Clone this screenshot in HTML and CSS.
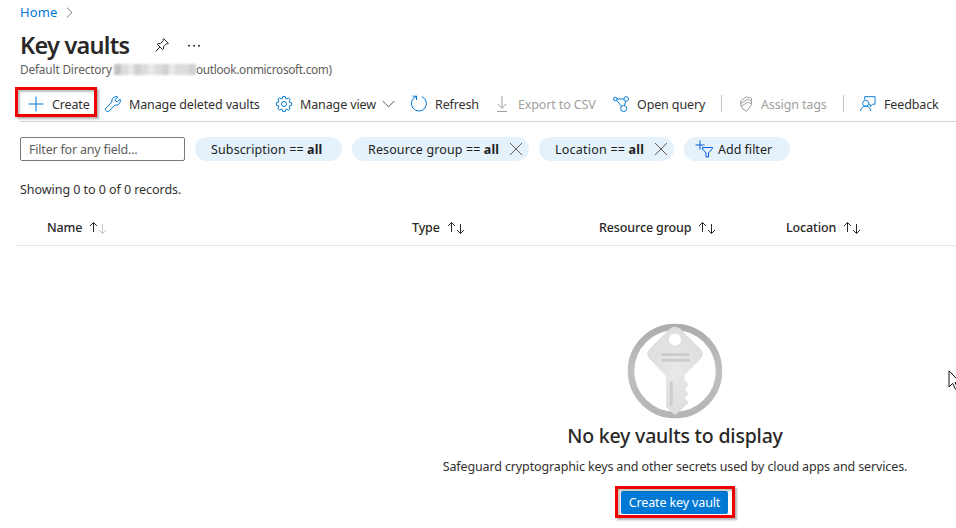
FILE: index.html
```html
<!DOCTYPE html>
<html lang="en">
<head>
<meta charset="utf-8">
<title>Key vaults</title>
<link rel="stylesheet" href="styles.css">
</head>
<body>
<svg class="defs" width="0" height="0" aria-hidden="true">
  <symbol id="up" viewBox="0 0 9 12"><path d="M4.500 11V1.500M1 5l3.500-3.500L8 5"/></symbol>
  <symbol id="down" viewBox="0 0 9 12"><path d="M4.500 1v9.500M1 7l3.500 3.500L8 7"/></symbol>
  <symbol id="close" viewBox="0 0 14 14"><path d="M1 1l12 12M13 1L1 13"/></symbol>
</svg>
<div class="page">
  <nav class="crumbs"><a class="t-home">Home</a>
    <svg width="7" height="11" viewBox="0 0 7 11"><path d="M1 .7l5 4.800-5 4.800"/></svg>
  </nav>
  <header class="title">
    <h1>Key vaults</h1>
    <svg class="pin" width="14" height="14" viewBox="0 0 14 14"><path d="M.6 13.400L5 9M2.300 6.300l5.400 5.400.8-.8V8.700l3-3 1.300.2.600-.6L8.700.7l-.6.6.2 1.300-3 3H3.100z"/></svg>
    <svg class="dots" width="12" height="3" viewBox="0 0 12 3"><path d="M0 1h2v1.500H0zM5 1h2v1.500H5zM10 1h2v1.500h-2z"/></svg>
  </header>
  <div class="directory"><span class="t-dir">Default Directory</span><span class="redacted"><i></i><i></i><i></i><i></i><i></i><i></i><i></i><i></i><i></i><i></i><i></i><i></i></span><span class="t-domain">outlook.onmicrosoft.com)</span></div>

  <div class="toolbar">
    <div class="cmd c-create">
      <svg width="16" height="16" viewBox="0 0 16 16"><path d="M8 .5v15M.5 8h15"/></svg><span>Create</span>
      <div class="mark"></div>
    </div>
    <div class="cmd c-deleted">
      <svg width="16" height="16" viewBox="0 0 16 16"><path d="M12.800.9A4.400 4.400 0 0 0 6.900 6L.9 12a1.800 1.800 0 0 0 0 2.500l.6.600a1.800 1.800 0 0 0 2.500 0L10 9.100a4.400 4.400 0 0 0 5.100-5.900l-2.700 2.600-1.700-.5-.5-1.700z"/></svg><span>Manage deleted vaults</span>
    </div>
    <div class="cmd c-view">
      <svg width="16" height="16" viewBox="0 0 16 16"><circle cx="8" cy="8" r="2.500"/><path d="M6.700.6h2.600l.4 1.900 1.200.5 1.700-1.100 1.600 1.700-1 1.600.5 1.300 1.800.3v2.500l-1.900.4-.5 1.200 1.100 1.700-1.700 1.600-1.600-1-1.300.5-.3 1.700H6.700l-.4-1.800-1.200-.5-1.700 1-1.600-1.600 1-1.600-.5-1.300-1.800-.3V6.700l1.900-.4.500-1.200-1.100-1.700 1.700-1.600 1.600 1 1.300-.5z"/></svg><span>Manage view</span>
      <svg class="chev" width="13" height="8" viewBox="0 0 13 8"><path d="M.7 1l5.800 5.800L12.300 1"/></svg>
    </div>
    <div class="cmd c-refresh">
      <svg width="16" height="17" viewBox="0 0 16 17"><path d="M5.500 1v4M1.500 1.200h4.300M5.300 1.500A7.500 7.500 0 1 0 10.800 1.600"/></svg><span>Refresh</span>
    </div>
    <div class="cmd c-export off">
      <svg width="16" height="16" viewBox="0 0 16 16"><path d="M8 0v12M3.700 7.800L8 12.200l4.300-4.400M3 15.500h10"/></svg><span>Export to CSV</span>
    </div>
    <div class="cmd c-query">
      <svg width="16" height="16" viewBox="0 0 16 16"><circle cx="2.300" cy="3" r="1.800"/><circle cx="13.200" cy="3" r="2.300"/><circle cx="10.700" cy="12.500" r="3"/><path d="M4.100 3h6.800M3.600 4.300l5 6M12.700 5.300l-1.300 4.200"/></svg><span>Open query</span>
    </div>
    <div class="sep"></div>
    <div class="cmd c-tags off">
      <svg width="16" height="16" viewBox="0 0 16 16"><path d="M2.500 5L8.500.8l5 1.500v6.500L8.500 15.300l-3.500-2L3 10zM2.700 7.500L9.500 3.300l3.800 1.500M3 10.300l6.700-4 3.500 1.300"/></svg><span>Assign tags</span>
    </div>
    <div class="sep"></div>
    <div class="cmd c-feedback">
      <svg width="16" height="16" viewBox="0 0 17 17"><path d="M5 4V.7h11v8h-2.500l-2.700 2.700V8.700H9.800"/><circle cx="6" cy="7.800" r="3.200"/><path d="M.7 16a5.300 5.300 0 0 1 10.600 0"/></svg><span>Feedback</span>
    </div>
  </div>

  <div class="filters">
    <div class="field"><span>Filter for any field...</span></div>
    <div class="pill p-sub"><span>Subscription == <b>all</b></span></div>
    <div class="pill p-group"><span>Resource group == <b>all</b></span><svg width="14" height="14"><use href="#close"/></svg></div>
    <div class="pill p-loc"><span>Location == <b>all</b></span><svg width="14" height="14"><use href="#close"/></svg></div>
    <div class="pill p-add"><svg width="19" height="18" viewBox="0 0 19 18"><path d="M.5 5h9M5 .5v9M7.500 7.500h10v1l-4 4.500v4h-2.500v-4L7.500 9z"/></svg><span>Add filter</span></div>
  </div>

  <div class="count"><span>Showing 0 to 0 of 0 records.</span></div>

  <div class="thead">
    <div class="th"><span>Name</span><svg width="9" height="12"><use href="#up"/></svg><svg class="dim" width="9" height="12"><use href="#down"/></svg></div>
    <div class="th"><span>Type</span><svg width="9" height="12"><use href="#up"/></svg><svg width="9" height="12"><use href="#down"/></svg></div>
    <div class="th"><span>Resource group</span><svg width="9" height="12"><use href="#up"/></svg><svg width="9" height="12"><use href="#down"/></svg></div>
    <div class="th"><span>Location</span><svg width="9" height="12"><use href="#up"/></svg><svg width="9" height="12"><use href="#down"/></svg></div>
  </div>

  <main class="empty">
    <svg class="key" width="96" height="96" viewBox="0 0 96 96">
      <defs>
        <linearGradient id="ring" x1="0" y1="0" x2="0" y2="1"><stop offset="0" stop-color="#adadad"/><stop offset=".5" stop-color="#c0c0c0"/><stop offset="1" stop-color="#b5b5b5"/></linearGradient>
        <radialGradient id="body"><stop offset="0" stop-color="#e9e9e9"/><stop offset="1" stop-color="#dedede"/></radialGradient>
      </defs>
      <circle cx="48" cy="48" r="44" fill="#fff" stroke="url(#ring)" stroke-width="6.500"/>
      <path fill="url(#body)" d="M43 5.500q5-3.500 10 0l20.500 20.500q4.500 5 0 10L57.500 52v5l3 3q1 1.500 0 3l-2.500 3 2.500 3q1 1.500 0 3L57.500 75l3 3q1 1.500 0 3L49.500 91q-1.500 1.500-3 0L39 84V53L22.500 36q-4.500-5 0-10z"/>
      <circle cx="48" cy="16.500" r="6" fill="#fff"/>
      <path stroke="#cdcdcd" stroke-width="3" stroke-linecap="round" d="M35.500 31.500h26M35.500 37.300h26M44.300 60v22"/>
    </svg>
    <h2><span>No key vaults to display</span></h2>
    <p><span>Safeguard cryptographic keys and other secrets used by cloud apps and services.</span></p>
    <div class="primary"><button><span>Create key vault</span></button><div class="mark"></div></div>
  </main>
  <svg class="cursor" width="14" height="20" viewBox="0 0 14 20"><path d="M1 .9v16l3.700-3.500 2.700 5.800 2.300-1-2.600-5.700h5.200z"/></svg>
</div>
</body>
</html>
```
FILE: styles.css
```css
* { box-sizing: border-box; }
body {
  margin: 0;
  background: #fff;
  color: #323130;
  font: 12.5px/18px "Noto Sans", "Open Sans", sans-serif;
  letter-spacing: -.13px;
}
svg { display: block; flex: none; fill: none; stroke: currentColor; }
.defs { position: absolute; }
span, a, h1 { white-space: nowrap; }
.page { position: relative; width: 956px; height: 528px; overflow: hidden; }

.crumbs { display: flex; align-items: center; height: 18px; margin-top: 3px; padding-left: 20px; }
.crumbs a { width: 46px; font-size: 13px; letter-spacing: .1px; color: #0078d4; }
.crumbs svg { color: #7a7876; }

.title { display: flex; align-items: center; height: 32px; margin-top: 8px; padding-left: 20px; }
.title h1 { width: 135px; margin: 0; font-size: 23.5px; font-weight: 600; line-height: 32px; letter-spacing: -.75px; color: #292827; }
.title h1 { padding-bottom: 1px; }
.pin { color: #201f1e; }
.dots { margin-left: 19px; fill: #323130; stroke: none; }

.directory { display: flex; height: 16px; padding-left: 20px; font-size: 11.8px; line-height: 16px; letter-spacing: -.3px; color: #605e5c; }
.t-dir { width: 94px; letter-spacing: -.15px; }
.redacted { display: flex; width: 82px; height: 11px; margin-top: 3px; filter: blur(1px); }
.redacted i { flex: 1; background: #dddbdb; }
.redacted i:first-child { background: #c4c2c2; }
.redacted i:nth-child(3n) { background: #ebe9e9; }
.redacted i:nth-child(4n) { background: #d2d0d0; }

.toolbar { display: flex; align-items: center; height: 36px; margin: 9px 0 0 20px; padding-left: 8px; border-bottom: 1px solid #d2d2d2; }
.cmd { position: relative; display: flex; align-items: center; gap: 8px; height: 36px; margin-right: 16px; }
.cmd span, .pill span, .field span, .th span { padding-top: 2px; }
.cmd > svg { color: #0078d4; }
.cmd .chev { color: #605e5c; }
.cmd.off, .cmd.off > svg { color: #a19f9d; }
.c-create { width: 61px; }
.c-deleted { width: 155px; }
.c-view { width: 119px; }
.c-view span { width: 74px; }
.c-refresh { width: 67px; }
.c-export { width: 103px; }
.c-query { width: 92px; }
.c-tags { width: 89px; }
.c-tags svg { margin-right: -1px; }
.c-feedback { width: 78px; }
.sep { width: 1px; height: 17px; margin-right: 16px; background: #c8c6c4; }
.mark { position: absolute; border: 3px solid #f00000; box-shadow: 2px 2px 2px rgba(0, 0, 0, .3), inset 2px 2px 2px rgba(0, 0, 0, .25); }
.c-create .mark { left: -13px; top: 1px; width: 82px; height: 30px; }

.filters { display: flex; height: 24px; margin: 15px 0 0 20px; }
.field { display: flex; align-items: center; width: 165px; height: 24px; margin-right: 10px; padding-left: 8px; border: 1px solid #7a7876; border-radius: 2px; letter-spacing: -.2px; color: #605e5c; }
.pill { display: flex; align-items: center; height: 24px; margin-right: 10px; padding-left: 16px; border-radius: 12px; background: #e5f1fb; letter-spacing: .12px; color: #201f1e; }
.pill svg { color: #605e5c; }
.p-sub { width: 147px; }
.p-group { width: 177px; }
.p-group span { width: 141px; }
.p-loc { width: 135px; letter-spacing: .22px; }
.p-loc span { width: 99px; }
.p-add { width: 106px; padding-left: 11px; gap: 4px; letter-spacing: 0; }
.p-add svg { color: #015cda; }

.count { height: 18px; margin: 20px 0 0 20px; letter-spacing: -.05px; }

.thead { display: grid; grid-template-columns: 365px 187px 187px 170px; align-items: center; height: 47px; margin-left: 15px; padding: 9px 0 0 32px; border-bottom: 1px solid #e6e5e4; }
.th { display: flex; align-items: center; font-weight: 500; color: #292827; }
.th span { margin-right: 7px; }
.th svg + svg { margin-top: 4px; }
.th .dim { color: #c8c6c4; }

.empty { display: flex; flex-direction: column; align-items: center; width: 562px; margin: 77px 0 0 394px; }
.key { stroke: none; }
.empty h2 { margin: 3px 0 0; font-size: 19.5px; font-weight: 500; line-height: 28px; letter-spacing: -.2px; color: #292827; }
.empty p { margin: 8px 0 0; }
.primary { position: relative; margin: 15px 1px 0 0; }
.primary button { display: flex; align-items: center; justify-content: center; width: 107px; height: 23px; padding: 1px 0 0; border: 0; border-radius: 2px; background: #0078d4; color: #fff; font: inherit; letter-spacing: inherit; }
.primary .mark { left: -6px; top: -5px; width: 120px; height: 32px; }
.cursor { position: absolute; left: 948px; top: 370px; fill: #fff; color: #111; }
```
